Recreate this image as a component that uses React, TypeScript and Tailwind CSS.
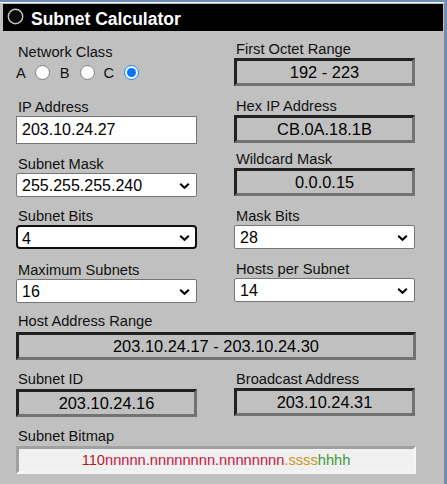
import React from "react";

function Label({ children, className = "" }: { children: React.ReactNode; className?: string }) {
  return (
    <div className={`pl-[2px] text-[14.667px] leading-[18px] text-[#111] whitespace-nowrap ${className}`}>
      {children}
    </div>
  );
}

function Box({ children, className = "" }: { children: React.ReactNode; className?: string }) {
  return (
    <div
      className={`h-[28px] flex items-center justify-center border-[3px] border-t-[#202020] border-l-[#202020] border-b-[#727272] border-r-[#727272] bg-[#c0c0c0] text-[16.4px] leading-[18px] text-black whitespace-nowrap ${className}`}
    >
      {children}
    </div>
  );
}

function Chevron() {
  return (
    <svg
      className="absolute right-[7px] top-[calc(50%+1px)] -translate-y-1/2 pointer-events-none"
      width="11"
      height="7"
      viewBox="0 0 11 7"
    >
      <polyline points="1.2,1.2 5.5,5.3 9.8,1.2" fill="none" stroke="#000" strokeWidth="2" />
    </svg>
  );
}

function Select({ value, focused = false }: { value: string; focused?: boolean }) {
  return (
    <div className="relative h-[24px] w-full">
      <select
        value={value}
        onChange={() => {}}
        className={`appearance-none block w-full h-full bg-white text-[16px] text-black outline-none ${
          focused
            ? "border-2 border-[#101010] rounded-[4px] pl-[4px]"
            : "border border-[#767676] rounded-[2px] pl-[5px]"
        }`}
      >
        <option>{value}</option>
      </select>
      <Chevron />
    </div>
  );
}

function Radio({ checked = false, className = "" }: { checked?: boolean; className?: string }) {
  return (
    <input
      type="radio"
      name="cls"
      defaultChecked={checked}
      className={`m-0 w-[15px] h-[15px] self-start mt-[0.5px] accent-[#0075ff] ${className}`}
    />
  );
}

export default function App() {
  return (
    <div className="min-h-[484px] w-[447px] bg-[#6b8db8] pt-[2px] font-['Liberation_Sans',Arial,sans-serif]">
      <div className="w-[445px] h-[482px] bg-[#c0c0c0] border-t border-t-[#f4f4f4] border-r border-r-[#8a8a8a]">
        {/* Header */}
        <div className="mt-[1px] ml-[3px] w-[440px] h-[27px] bg-black flex items-start">
          <svg className="mt-[4px] ml-[4px]" width="17" height="17" viewBox="0 0 17 17">
            <circle cx="8.5" cy="8.5" r="7.2" fill="#0a0a0a" stroke="#c4c4c4" strokeWidth="1.4" />
          </svg>
          <div className="ml-[7px] pt-[5px] text-[17.5px] leading-[20px] font-bold text-white whitespace-nowrap">
            Subnet Calculator
          </div>
        </div>

        {/* Content */}
        <div className="pl-[16px]">
          <div className="flex items-start">
            {/* Left column */}
            <div className="w-[181px] flex flex-col">
              <Label className="mt-[12px]">Network Class</Label>
              <div className="mt-[3px] h-[18px] flex items-center text-[14.667px] leading-[18px] text-[#111]">
                <span>A</span>
                <Radio className="ml-[9px]" />
                <span className="ml-[10px]">B</span>
                <Radio className="ml-[10px]" />
                <span className="ml-[9px]">C</span>
                <Radio className="ml-[10px]" checked />
              </div>
              <Label className="mt-[16px]">IP Address</Label>
              <input
                defaultValue="203.10.24.27"
                className="h-[28px] w-full bg-white border border-[#767676] pl-[5px] text-[16px] text-black outline-none"
              />
              <Label className="mt-[11px]">Subnet Mask</Label>
              <Select value="255.255.255.240" />
              <Label className="mt-[10px]">Subnet Bits</Label>
              <Select value="4" focused />
              <Label className="mt-[12px]">Maximum Subnets</Label>
              <Select value="16" />
            </div>

            {/* Right column */}
            <div className="ml-[37px] w-[181px] flex flex-col">
              <Label className="mt-[9px]">First Octet Range</Label>
              <Box>192 - 223</Box>
              <Label className="mt-[11px]">Hex IP Address</Label>
              <Box>CB.0A.18.1B</Box>
              <Label className="mt-[7px]">Wildcard Mask</Label>
              <Box>0.0.0.15</Box>
              <Label className="mt-[11px]">Mask Bits</Label>
              <Select value="28" />
              <Label className="mt-[11px]">Hosts per Subnet</Label>
              <Select value="14" />
            </div>
          </div>

          <Label className="mt-[9px]">Host Address Range</Label>
          <Box className="mt-[2px] w-[400px]">203.10.24.17 - 203.10.24.30</Box>

          <div className="flex items-start mt-[10px]">
            <div className="w-[181px] flex flex-col">
              <Label>Subnet ID</Label>
              <Box className="mt-[1px]">203.10.24.16</Box>
            </div>
            <div className="ml-[37px] w-[181px] flex flex-col">
              <Label>Broadcast Address</Label>
              <Box>203.10.24.31</Box>
            </div>
          </div>

          <Label className="mt-[10px]">Subnet Bitmap</Label>
          <div className="mt-[1px] w-[400px] h-[28px] flex items-center justify-center bg-[#f0f0f0] border-[3px] border-t-[#a0a0a0] border-l-[#a0a0a0] border-b-[#f4f4f4] border-r-[#f4f4f4] text-[14.667px] leading-[18px] whitespace-nowrap">
            <span className="text-[#b81820]">110</span>
            <span className="text-[#c8143c]">nnnnn.nnnnnnnn.nnnnnnnn</span>
            <span className="text-[#c8941e]">.ssss</span>
            <span className="text-[#3f9a3a]">hhhh</span>
          </div>
        </div>
      </div>
    </div>
  );
}
